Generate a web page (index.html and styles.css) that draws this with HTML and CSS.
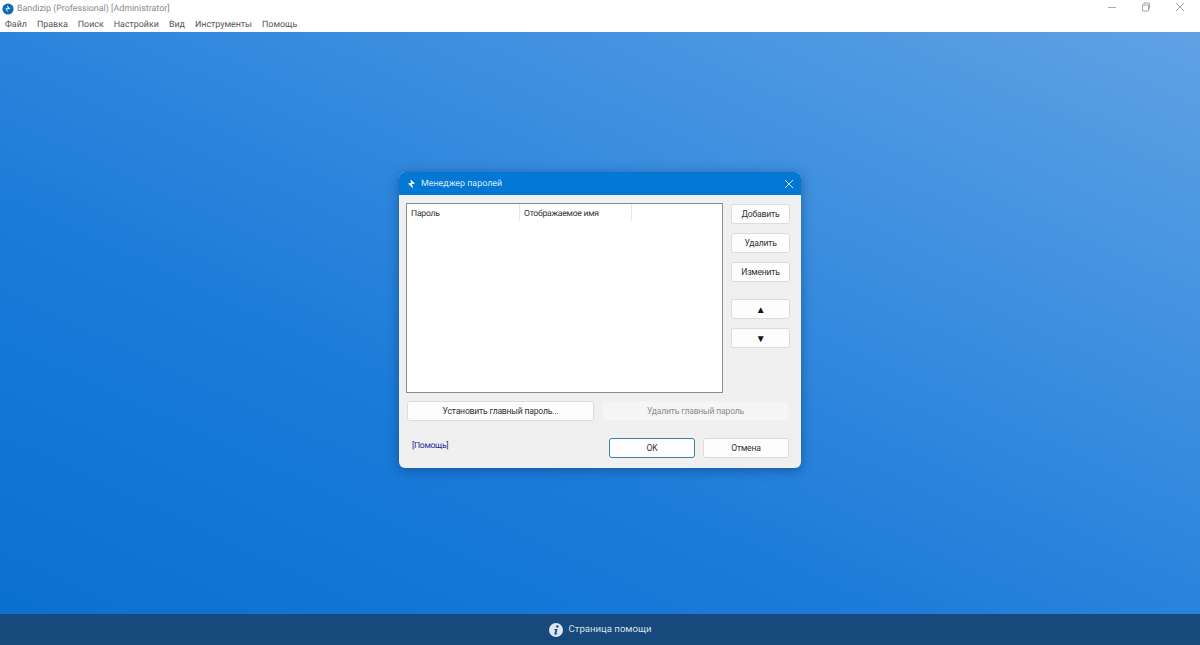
FILE: index.html
```html
<!DOCTYPE html>
<html lang="ru">
<head>
<meta charset="utf-8">
<title>Bandizip</title>
<link rel="stylesheet" href="styles.css">
</head>
<body>
<div class="app">
  <header class="titlebar">
    <div class="title-left">
      <svg class="app-icon" width="12" height="12" viewBox="0 0 12 12"><circle cx="6" cy="6" r="5.6" fill="#0f6cb8"/><path d="M5 2.2 8.4 6 5 6.2 6.2 9.8 3.4 5.4 5.8 5.2Z" fill="#fff"/></svg>
      <span>Bandizip (Professional) [Administrator]</span>
    </div>
    <div class="win-controls">
      <svg width="10" height="10" viewBox="0 0 10 10"><path d="M1 5.5H9" stroke="#a8a8a8" fill="none"/></svg>
      <svg width="10" height="10" viewBox="0 0 10 10"><path d="M1.500 3h6v6h-6zM3 3V1h5.500v5.500H7.500" stroke="#a8a8a8" fill="none"/></svg>
      <svg width="10" height="10" viewBox="0 0 10 10"><path d="M1 1 9 9M9 1 1 9" stroke="#a8a8a8" fill="none"/></svg>
    </div>
  </header>
  <nav class="menubar">
    <span>Файл</span><span>Правка</span><span>Поиск</span><span>Настройки</span><span>Вид</span><span>Инструменты</span><span>Помощь</span>
  </nav>
  <main class="desktop"></main>
  <footer class="helpbar">
    <svg width="14" height="14" viewBox="0 0 14 14"><circle cx="7" cy="7" r="7" fill="#dfe6ee"/><circle cx="8.300" cy="3.500" r="1.300" fill="#1b4f83"/><path d="M5.400 6h3.100L7.400 10.500h1L8 11.500H5.300L6.300 7H5.200Z" fill="#1b4f83"/></svg>
    <span>Страница помощи</span>
  </footer>
</div>

<section class="dialog">
  <div class="dlg-title">
    <div class="dlg-title-left">
      <svg width="9" height="10" viewBox="0 0 9 10"><path d="M3.500 0.500 8 4.500 5 5 6 9.500 1 4.500 4 4Z" fill="#fff"/></svg>
      <span>Менеджер паролей</span>
    </div>
    <svg width="10" height="10" viewBox="0 0 10 10"><path d="M1 1 9 9M9 1 1 9" stroke="#cfe6f8" fill="none"/></svg>
  </div>
  <div class="dlg-body">
    <div class="dlg-main">
      <div class="list">
        <div class="list-head">
          <div class="col col-1">Пароль</div>
          <div class="col col-2">Отображаемое имя</div>
        </div>
      </div>
      <div class="side">
        <button class="btn">Добавить</button>
        <button class="btn">Удалить</button>
        <button class="btn">Изменить</button>
        <button class="btn btn-arrow btn-gap">▲</button>
        <button class="btn btn-arrow">▼</button>
      </div>
    </div>
    <div class="dlg-row">
      <button class="btn btn-wide">Установить главный пароль...</button>
      <button class="btn btn-wide btn-disabled">Удалить главный пароль</button>
    </div>
    <div class="dlg-foot">
      <a class="help-link">[Помощь]</a>
      <div class="foot-btns">
        <button class="btn btn-foot btn-default">OK</button>
        <button class="btn btn-foot">Отмена</button>
      </div>
    </div>
  </div>
</section>
</body>
</html>
```

FILE: styles.css
```css
* { box-sizing: border-box; }
html, body { margin: 0; padding: 0; height: 100%; overflow: hidden; }
body { font-family: Roboto, "Noto Sans", sans-serif; font-size: 9px; color: #333; background: #fff; text-rendering: geometricPrecision; }
.app { display: flex; flex-direction: column; height: 645px; width: 1200px; }
.titlebar { height: 17px; display: flex; justify-content: space-between; align-items: center; background: #fff; padding-left: 2px; color: #8a8a8a; }
.title-left { display: flex; align-items: center; gap: 3px; font-size: 8.900px; }
.win-controls { display: flex; gap: 24px; padding-right: 15px; margin-top: -3px; }
.menubar { height: 15px; display: flex; gap: 10px; padding-left: 5px; align-items: center; background: #fff; color: #555; font-size: 8.900px; }
.desktop { flex: 1; background: linear-gradient(205deg, #5fa2e4 0%, #3f90e0 30%, #1b7bd9 65%, #0a70d0 100%); }
.helpbar { height: 31px; background: #17497c; display: flex; align-items: center; justify-content: center; gap: 6px; color: #d6e0ea; font-size: 9.600px; }
.dialog { position: absolute; left: 399px; top: 172px; width: 402px; height: 296px; border-radius: 6px; overflow: hidden; background: #f0f0f0; box-shadow: 0 2px 12px rgba(0, 40, 90, .45); }
.dlg-title { height: 23px; background: #0277d4; display: flex; align-items: center; justify-content: space-between; padding: 0 7px 0 8px; color: #d5ebfb; font-size: 8.900px; }
.dlg-title-left { display: flex; align-items: center; gap: 5px; }
.dlg-body { padding: 8px 11px 0 7px; display: flex; flex-direction: column; }
.dlg-main { display: flex; gap: 8px; }
.list { width: 317px; height: 190px; background: #fff; border: 1px solid #8c8c8c; }
.list-head { display: flex; height: 17px; }
.col { padding: 5px 0 0 4px; border-right: 1px solid #e6e6e6; font-size: 8.600px; letter-spacing: -.25px; line-height: 11px; white-space: nowrap; }
.col-1 { width: 113px; }
.col-2 { width: 112px; }
.side { display: flex; flex-direction: column; gap: 9px; padding-top: 1px; }
.btn { font-family: inherit; font-size: 8.600px; letter-spacing: -.2px; color: #333; height: 20px; width: 59px; padding: 0; background: #fdfdfd; border: 1px solid #dcdcdc; border-radius: 3px; }
.btn-gap { margin-top: 8px; }
.btn-arrow { font-size: 10px; color: #111; }
.dlg-row { display: flex; gap: 8px; margin-top: 8px; padding-left: 1px; }
.btn-wide { width: 187px; }
.btn-disabled { background: #f5f5f5; border-color: #f1f1f1; color: #8f8f8f; }
.dlg-foot { display: flex; justify-content: space-between; margin-top: 17px; padding-left: 6px; }
.help-link { color: #2a2a9a; font-size: 8.600px; letter-spacing: -.3px; line-height: 11px; margin-top: 3px; }
.foot-btns { display: flex; gap: 8px; padding-right: 1px; }
.btn-foot { width: 86px; }
.btn-default { border-color: #3f7fa8; }
```
